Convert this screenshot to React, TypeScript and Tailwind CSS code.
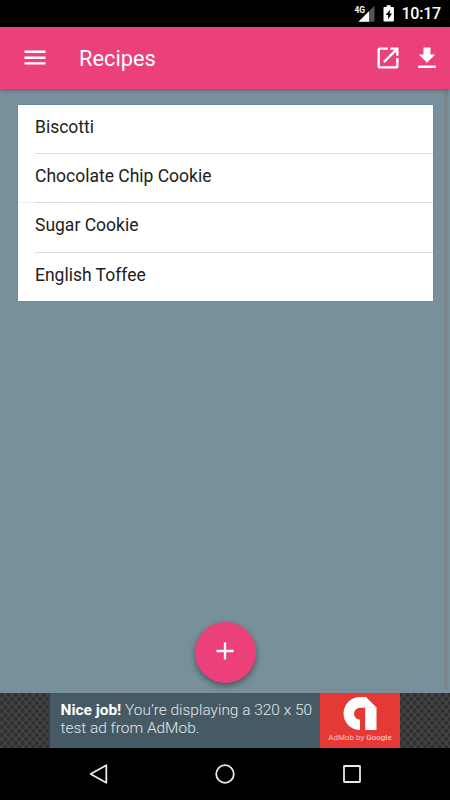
import type { ReactNode } from 'react';

const recipes = ['Biscotti', 'Chocolate Chip Cookie', 'Sugar Cookie', 'English Toffee'];

const StatusBar = () => (
	<div className="flex h-[27px] shrink-0 items-center justify-end bg-black pr-[9px] text-white">
		<svg width="22" height="27" viewBox="0 0 22 27">
			<path d="M21.5 5.8v15.9H5.5z" fill="#555" />
			<path d="M16 11.3v10.4H5.5z" fill="#fff" />
			<text x="1.5" y="12.8" fontSize="9" fontWeight="700" fill="#fff" textLength="10.5" lengthAdjust="spacingAndGlyphs">
				4G
			</text>
		</svg>
		<svg className="ml-2" width="12" height="27" viewBox="0 0 12 27">
			<path d="M3.6 5.2h4v1.7h2.2c.7 0 1.1.4 1.1 1.1v12.5c0 .7-.4 1.1-1.1 1.1H1.6c-.7 0-1.1-.4-1.1-1.1V8c0-.7.4-1.1 1.1-1.1h2z" fill="#fff" />
			<path d="M7.3 9.5 2.6 15h2.6v4.2L9 13.4H6.6z" fill="#000" />
		</svg>
		<span className="ml-[6px] text-[16px] leading-[29px] font-medium tracking-[-0.2px]">10:17</span>
	</div>
);

const IconButton = ({ label, className, children }: { label: string; className: string; children: ReactNode }) => (
	<button aria-label={label} className={className}>
		{children}
	</button>
);

const Toolbar = () => (
	<header className="relative z-10 flex h-[62px] shrink-0 items-center bg-[#ec407a] pr-[9.5px] pl-[21px] text-white shadow-[0_1px_4px_rgba(0,0,0,0.35)]">
		<IconButton label="Menu" className="size-7">
			<svg width="28" height="28" viewBox="0 0 28 28" fill="currentColor">
				<path d="M3.5 6.6h21v2.3h-21zM3.5 12.6h21v2.3h-21zM3.5 18.3h21v2.3h-21z" />
			</svg>
		</IconButton>
		<h1 className="ml-[30px] flex-1 pt-[2px] text-[21.8px] leading-[60px]">Recipes</h1>
		<IconButton label="Open" className="size-7">
			<svg width="28" height="28" viewBox="0 0 24 24" fill="currentColor">
				<path d="M19 19H5V5h7V3H5c-1.11 0-2 .9-2 2v14c0 1.1.89 2 2 2h14c1.1 0 2-.9 2-2v-7h-2v7zM14 3v2h3.59l-9.83 9.83 1.41 1.41L19 6.41V10h2V3h-7z" />
			</svg>
		</IconButton>
		<IconButton label="Download" className="ml-[10.5px] size-7">
			<svg width="28" height="28" viewBox="0 0 24 24" fill="currentColor">
				<path d="M19 9h-4V3H9v6H5l7 7 7-7zM4.5 18.5v2h15v-2z" />
			</svg>
		</IconButton>
	</header>
);

const RecipeList = () => (
	<ul className="mr-[17px] ml-[17.5px] h-[196px] bg-white text-[17.5px] text-[#1c1c1c] shadow-[0_0_1px_rgba(40,80,90,0.6)]">
		{recipes.map((name, i) => (
			<li key={name} className={i === 1 ? 'h-[49.2px] pl-[17.5px] shadow-[inset_0_-1px_0_#ececec]' : 'h-[49.2px] pl-[17.5px]'}>
				<div className={i < recipes.length - 1 ? 'h-full border-b border-[#dcdcdc]' : 'h-full'}>
					<span className="block pt-[10px] leading-6">{name}</span>
				</div>
			</li>
		))}
	</ul>
);

const AdBanner = () => (
	<div className="flex h-[55px] shrink-0 justify-center bg-[#414141] bg-[radial-gradient(circle_at_25%_25%,#303030_1.4px,transparent_2.6px),radial-gradient(circle_at_75%_75%,#303030_1.4px,transparent_2.6px)] bg-[length:7px_8px]">
		<div className="w-[270px] bg-[#455a64] pt-[8px] pl-[10.5px] text-[15.45px] leading-[18px] font-light whitespace-nowrap text-[#e2e8ea]">
			<b className="font-bold text-white">Nice job!</b> You’re displaying a 320 x 50
			<br />
			test ad from AdMob.
		</div>
		<div className="flex w-[80px] flex-col items-center bg-[#e53935] pt-[4px] text-white">
			<svg width="34" height="34" viewBox="0 0 34 34">
				<path d="M17 0h6l10.5 10.5V33H22.2V10.8H17a6 6 0 0 0 0 12V33A16.5 16.5 0 0 1 17 0z" fill="#fff" />
				<path d="M22.2 10.6h11.3" stroke="#ddd" strokeWidth=".6" />
			</svg>
			<span className="text-[8px] leading-[14px] whitespace-nowrap text-[#fbc4c2]">
				AdMob by <span className="font-medium">Google</span>
			</span>
		</div>
	</div>
);

const NavBar = () => (
	<nav className="flex h-[52px] shrink-0 items-center justify-between bg-black px-[88px]">
		<svg width="20" height="22" viewBox="0 0 20 22" fill="none" stroke="#e8e8e8" strokeWidth="1.8" strokeLinejoin="round">
			<path d="M18.3 2.2v17.6L2.6 11z" />
		</svg>
		<svg width="20" height="22" viewBox="0 0 20 22" fill="none" stroke="#e8e8e8" strokeWidth="1.8">
			<circle cx="10" cy="11" r="8.8" />
		</svg>
		<svg width="20" height="22" viewBox="0 0 20 22" fill="none" stroke="#e8e8e8" strokeWidth="1.8">
			<rect x="2" y="3" width="16" height="16" rx=".5" />
		</svg>
	</nav>
);

const App = () => (
	<div className="flex h-[800px] w-[450px] flex-col overflow-hidden bg-[#78909c] font-[Roboto,sans-serif]">
		<StatusBar />
		<Toolbar />
		<main className="relative flex-1 pt-4">
			<RecipeList />
			<div className="absolute top-0 right-[2px] bottom-[3px] w-[4px] bg-[#7d858b]" />
			<button
				aria-label="Add recipe"
				className="absolute bottom-[10px] left-[194.5px] flex size-[61px] items-center justify-center rounded-full bg-[#ec407a] shadow-[0_3px_6px_rgba(0,0,0,0.4)]"
			>
				<svg className="mb-[3px]" width="18" height="18" viewBox="0 0 18 18" stroke="#fff" strokeWidth="2.3">
					<path d="M9 .5v17M.5 9h17" />
				</svg>
			</button>
		</main>
		<AdBanner />
		<NavBar />
	</div>
);

export default App;
